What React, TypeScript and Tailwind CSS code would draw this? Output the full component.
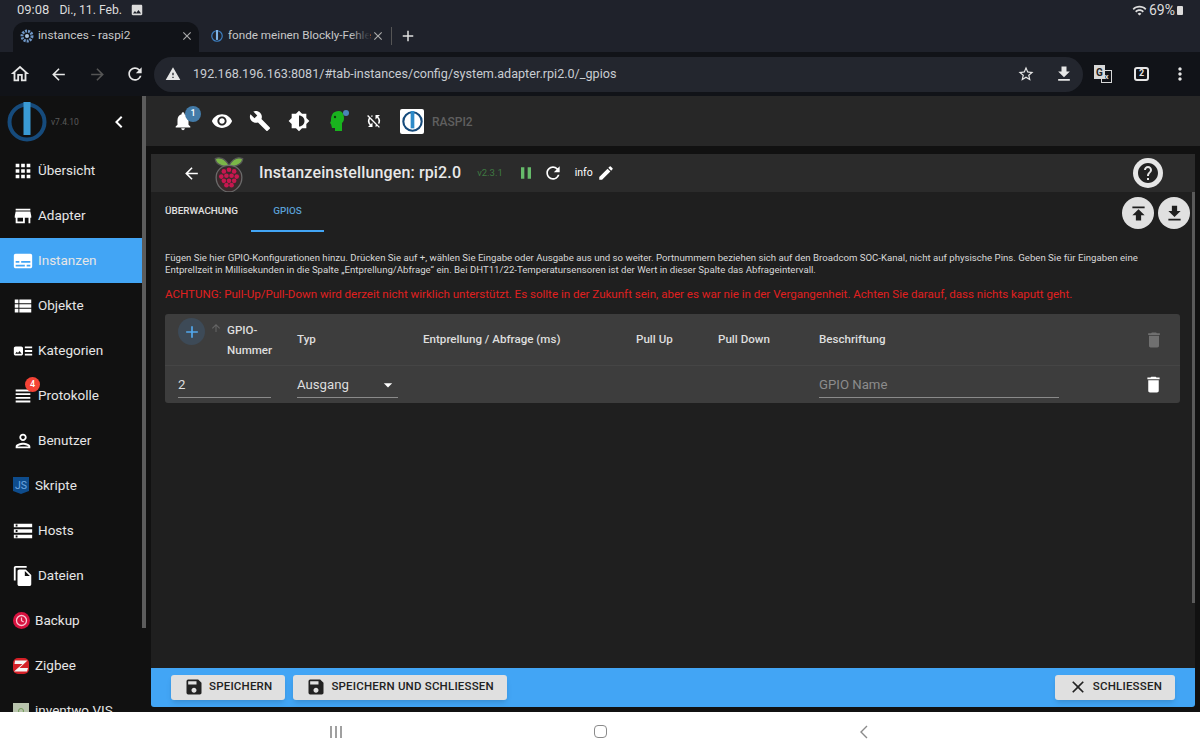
import {
  MdAdd,
  MdApps,
  MdArrowBack,
  MdArrowDropDown,
  MdArrowForward,
  MdArrowUpward,
  MdBrightness6,
  MdBuild,
  MdChevronLeft,
  MdClose,
  MdDelete,
  MdEdit,
  MdFileCopy,
  MdFileDownload,
  MdHelp,
  MdMoreVert,
  MdNotifications,
  MdOutlineHome,
  MdOutlinePerson,
  MdPause,
  MdPublish,
  MdRefresh,
  MdSave,
  MdStarBorder,
  MdStorage,
  MdStore,
  MdSubtitles,
  MdSyncDisabled,
  MdViewHeadline,
  MdViewList,
  MdVisibility,
  MdWarning,
  MdWifi,
  MdImage,
  MdArtTrack,
} from "react-icons/md";

// -------------------------------
// Logos
// -------------------------------
function IoLogo({ size = 40, ring = "#164b7c", bar = "#3a9bd5" }: { size?: number; ring?: string; bar?: string }) {
  return (
    <svg width={size} height={size} viewBox="0 0 40 40">
      <circle cx="20" cy="20" r="17.5" fill="none" stroke={ring} strokeWidth="4" />
      <rect x="16.5" y="0" width="7" height="33" fill={bar} />
    </svg>
  );
}

function Raspberry() {
  const seeds = [
    [15, 19], [21, 17], [27, 19], [12, 25], [18, 24], [24, 24], [30, 25],
    [15, 30], [21, 30], [27, 30], [18, 35], [24, 35],
  ];
  return (
    <svg width="36" height="38" viewBox="0 0 42 44">
      <path d="M21 12C16 3 9 2 5 4c0 5 5 9 16 10C32 13 37 9 37 4c-5-2-11-1-16 8z" fill="#7ab648" stroke="#555" strokeWidth="1.5" />
      <path d="M21 12c-9 0-15 6-15 14 0 10 8 17 15 17s15-7 15-17c0-8-6-14-15-14z" fill="#3a2a2c" stroke="#6b6b6b" strokeWidth="1.5" />
      {seeds.map(([x, y]) => (
        <circle key={`${x}-${y}`} cx={x} cy={y} r="2.7" fill="#c7174f" />
      ))}
    </svg>
  );
}

function BackupIcon() {
  return (
    <svg width="17" height="17" viewBox="0 0 17 17">
      <circle cx="8.5" cy="8.5" r="8.5" fill="#d8123f" />
      <circle cx="8.5" cy="8.5" r="5" fill="none" stroke="#f8c6d2" strokeWidth="1.3" />
      <path d="M8.5 5.5v3.2l2.2 1.3" fill="none" stroke="#f8c6d2" strokeWidth="1.2" />
    </svg>
  );
}

function ZigbeeIcon() {
  return (
    <svg width="16" height="16" viewBox="0 0 16 16">
      <rect x="0" y="0" width="16" height="16" rx="5" fill="#d42027" />
      <path d="M2 2.5h12.5L6.5 10H15l-1 3.5H1L9.5 6H1.5z" fill="#f4f4f4" />
    </svg>
  );
}

function JsIcon() {
  return (
    <svg width="16" height="17" viewBox="0 0 16 17">
      <path d="M0 0h16v14l-8 3-8-3z" fill="#0e4c8c" />
      <text x="8" y="12" textAnchor="middle" fontSize="10.5" fontFamily="Roboto, sans-serif" fill="#6fa8e0">
        JS
      </text>
    </svg>
  );
}

function InventwoIcon() {
  return (
    <div className="flex w-4 h-4 items-center justify-center bg-[#b9c4ad]">
      <div className="w-1.5 h-1.5 rounded-full border border-[#6f9a55]" />
    </div>
  );
}

// -------------------------------
// Sidebar
// -------------------------------
const NAV = [
  { label: "Übersicht", icon: <MdApps size={22} /> },
  { label: "Adapter", icon: <MdStore size={22} /> },
  { label: "Instanzen", icon: <MdSubtitles size={22} />, active: true },
  { label: "Objekte", icon: <MdViewList size={22} /> },
  { label: "Kategorien", icon: <MdArtTrack size={22} /> },
  { label: "Protokolle", icon: <MdViewHeadline size={22} />, badge: "4" },
  { label: "Benutzer", icon: <MdOutlinePerson size={22} /> },
  { label: "Skripte", icon: <JsIcon />, small: true },
  { label: "Hosts", icon: <MdStorage size={22} /> },
  { label: "Dateien", icon: <MdFileCopy size={22} /> },
  { label: "Backup", icon: <BackupIcon />, small: true },
  { label: "Zigbee", icon: <ZigbeeIcon />, small: true },
  { label: "inventwo VIS", icon: <InventwoIcon />, small: true },
];

function Sidebar() {
  return (
    <aside className="flex w-[146px] shrink-0 h-full overflow-hidden bg-[#111111]">
      <div className="w-[142px] flex flex-col">
        <div className="flex h-[52px] shrink-0 items-center pl-[7px] pr-3">
          <IoLogo />
          <span className="ml-[4px] text-[8.5px] text-[#5a5a5a]">v7.4.10</span>
          <MdChevronLeft size={24} className="ml-auto -mr-[1px] text-white" />
        </div>
        {NAV.map((n) => (
          <div
            key={n.label}
            className={`relative flex h-[45px] shrink-0 items-center text-[13.5px] text-[#e6e6e6] ${n.active ? "bg-[#42a5f5]" : ""} ${n.small ? "pl-[13px]" : "pl-[12px] gap-[4px]"}`}
          >
            <span className={`flex w-[22px] text-white ${n.small ? "justify-start" : "justify-center"}`}>{n.icon}</span>
            {n.badge && (
              <span className="absolute left-[25px] top-[4px] flex h-[15px] w-[15px] items-center justify-center rounded-full bg-[#f44336] text-[9px] font-medium text-white">
                {n.badge}
              </span>
            )}
            <span>{n.label}</span>
          </div>
        ))}
      </div>
      <div className="w-[4px] h-[532px] bg-[#5c5c5c]" />
    </aside>
  );
}

// -------------------------------
// Browser chrome
// -------------------------------
function BrowserChrome() {
  return (
    <div className="shrink-0">
      <div className="bg-[#1f222b] text-[#dcdcdc]">
        <div className="flex h-[20px] items-center pl-[17px] pr-[17px] text-[13px]">
          <span>09:08</span>
          <span className="ml-[10px] text-[12.2px]">Di., 11. Feb.</span>
          <MdImage size={14} className="ml-[8px]" />
          <MdWifi size={15} className="ml-auto" />
          <span className="ml-[2px] text-[14px]">69%</span>
          <div className="ml-[2px] h-[9px] w-[6px] rounded-[1px] bg-[#dcdcdc]" />
        </div>
        <div className="flex h-[32px] items-end pl-[13px] text-[11.8px]">
          <div className="flex h-[30px] w-[186px] items-center rounded-t-[12px] bg-[#111318] pb-[2px] pl-[7px] pr-[5px]">
            <svg width="14" height="14" viewBox="0 0 14 14">
              <circle cx="7" cy="7" r="5" fill="none" stroke="#6f97c7" strokeWidth="3" strokeDasharray="2 1" />
              <circle cx="7" cy="7" r="2" fill="#a8c3e0" />
            </svg>
            <span className="ml-[4px] text-[#c8c8c8]">instances - raspi2</span>
            <MdClose size={14} className="ml-auto text-[#aaaaaa]" />
          </div>
          <div className="flex h-[30px] items-center pb-[2px] pl-[12px] text-[#c8c8c8]">
            <IoLogo size={12} ring="#3d7fc1" bar="#7fb4e6" />
            <span className="relative ml-[5px] w-[142px] text-[11.7px] whitespace-nowrap">
              fonde meinen Blockly-Fehle
              <span className="absolute right-0 top-0 h-full w-[20px] bg-gradient-to-r from-transparent to-[#1f222b]" />
            </span>
            <MdClose size={14} className="ml-[1px] text-[#aaaaaa]" />
            <div className="ml-[6px] h-[18px] w-px bg-[#555555]" />
            <MdAdd size={18} className="ml-[7px] text-[#e0e0e0]" />
          </div>
        </div>
      </div>
      <div className="flex h-[44px] items-center bg-[#111318] pl-[9px] text-[#e6e6e6]">
        <MdOutlineHome size={22} />
        <MdArrowBack size={19} className="ml-[18px]" />
        <MdArrowForward size={19} className="ml-[20px] text-[#555555]" />
        <MdRefresh size={20} className="ml-[18px]" />
        <div className="ml-[9px] flex h-[35px] w-[929px] items-center rounded-full bg-[#23262e] pl-[11px] pr-[9px]">
          <MdWarning size={16} />
          <span className="ml-[12px] text-[12.6px] text-[#c8ccd2]">192.168.196.163:8081/#tab-instances/config/system.adapter.rpi2.0/_gpios</span>
          <MdStarBorder size={18} className="ml-auto" />
          <MdFileDownload size={20} className="ml-[19px]" />
        </div>
        {/* translate button */}
        <div className="relative ml-[11px] h-[18px] w-[18px]">
          <div className="absolute right-0 bottom-0 flex h-[13px] w-[11px] items-center justify-center border border-[#d8d8d8] bg-[#111318] text-[8px] font-bold text-[#d8d8d8]">
            x
          </div>
          <div className="absolute left-0 top-0 flex h-[14px] w-[11px] items-center justify-center bg-[#d8d8d8] text-[10px] font-bold text-[#222222]">
            G
          </div>
        </div>
        <div className="ml-[22px] flex h-[14px] w-[15px] items-center justify-center rounded-[3px] border-2 border-[#e6e6e6] text-[9px] font-bold">
          2
        </div>
        <MdMoreVert size={20} className="ml-[21px]" />
      </div>
    </div>
  );
}

// -------------------------------
// Top bar of the admin
// -------------------------------
function TopBar() {
  return (
    <div className="flex h-[50px] shrink-0 items-center bg-[#272727] pl-[26px] text-white">
      <div className="relative">
        <MdNotifications size={22} />
        <span className="absolute -right-[7px] -top-[4px] flex h-[16px] w-[16px] items-center justify-center rounded-full bg-[#437ba8] text-[9px] font-medium">
          1
        </span>
      </div>
      <MdVisibility size={22} className="ml-[17px]" />
      <MdBuild size={22} className="ml-[16px]" />
      <MdBrightness6 size={22} className="ml-[17px]" />
      <div className="relative ml-[20px]">
        <svg width="14" height="20" viewBox="0 0 14 20">
          <path d="M2 4c1-3 4-4 7-4 3 0 5 3 5 7 0 3-1 4-2 5v8H5v-3H2l-1-4-1-1 1-2c0-2 0-4 1-6z" fill="#19b31e" />
          <circle cx="5" cy="6" r="1.2" fill="#0c3d0e" />
        </svg>
        <span className="absolute -right-[5px] -top-[1px] h-[6px] w-[6px] rounded-full bg-[#4a86b8]" />
      </div>
      <MdSyncDisabled size={18} className="ml-[21px]" />
      <div className="ml-[17px] flex h-[25px] w-[24px] items-center justify-center rounded-[2px] bg-white">
        <IoLogo size={21} ring="#164b7c" bar="#2e8bc9" />
      </div>
      <span className="ml-[8px] pt-[1px] text-[12px] font-medium text-[#5f5f5f]">RASPI2</span>
    </div>
  );
}

// -------------------------------
// Instance settings panel
// -------------------------------
function PanelHeader() {
  return (
    <div className="flex h-[38px] shrink-0 items-center bg-[#2b2b2b] pl-[31px] pr-[32px] text-white">
      <MdArrowBack size={19} />
      <div className="ml-[10px] -mb-[2px]">
        <Raspberry />
      </div>
      <span className="ml-[12px] text-[16px] font-medium tracking-[0.14px] text-[#e8e8e8]">Instanzeinstellungen: rpi2.0</span>
      <span className="ml-[16px] text-[9.5px] text-[#3f7a42]">v2.3.1</span>
      <MdPause size={20} className="ml-[13px] text-[#66bb6a]" />
      <MdRefresh size={20} className="ml-[7px]" />
      <span className="ml-[12px] text-[10.5px]">info</span>
      <MdEdit size={18} className="ml-[4px]" />
      <div className="relative ml-auto -mt-[1px] flex h-[30px] w-[30px] items-center justify-center rounded-full bg-[#e6e6e6]">
        <MdHelp size={24} className="text-[#222222]" />
      </div>
    </div>
  );
}

function Fab({ children }: { children: React.ReactNode }) {
  return (
    <div className="flex h-[32px] w-[32px] items-center justify-center rounded-full bg-[#e0e0e0] text-[#1f1f1f]">
      {children}
    </div>
  );
}

const HEAD_COLS = "grid grid-cols-[119px_126px_213px_82px_101px_1fr_50px] items-center";

function GpioTable() {
  return (
    <div className="ml-[14px] mr-[15px] mt-[13px] rounded-[3px] bg-[#3d3d3d] text-[#dedede]">
      <div className={`${HEAD_COLS} h-[52px] border-b border-[#454545] text-[11.6px] font-medium`}>
        <div className="relative flex items-center pl-[13px]">
          <div className="-mt-[16px] flex h-[27px] w-[27px] items-center justify-center rounded-full bg-[#3d4a57]">
            <MdAdd size={20} className="text-[#52a8ee]" />
          </div>
          <MdArrowUpward size={12} className="ml-[5px] -mt-[24px] text-[#666666]" />
          <div className="ml-[5px] leading-[20px]">
            GPIO-
            <br />
            Nummer
          </div>
        </div>
        <div className="pl-[13px]">Typ</div>
        <div className="pl-[13px]">Entprellung / Abfrage (ms)</div>
        <div className="pl-[13px]">Pull Up</div>
        <div className="pl-[13px]">Pull Down</div>
        <div className="pl-[13px]">Beschriftung</div>
        <div className="flex justify-center pr-[2px]">
          <MdDelete size={20} className="text-[#707070]" />
        </div>
      </div>
      <div className={`${HEAD_COLS} h-[37px] pb-[4px] text-[13.2px]`}>
        <div className="pl-[13px] pr-[13px]">
          <div className="flex h-[30px] items-center border-b border-[#8a8a8a] pt-[5px]">2</div>
        </div>
        <div className="pl-[13px] pr-[12px]">
          <div className="flex h-[30px] items-center justify-between border-b border-[#8a8a8a] pt-[5px]">
            <span>Ausgang</span>
            <MdArrowDropDown size={20} className="text-white" />
          </div>
        </div>
        <div />
        <div />
        <div />
        <div className="pl-[13px] pr-[71px]">
          <div className="flex h-[30px] items-center border-b border-[#8a8a8a] pt-[5px] text-[#8c8c8c]">GPIO Name</div>
        </div>
        <div className="flex justify-center pr-[4px] pt-[4px]">
          <MdDelete size={21} className="text-white" />
        </div>
      </div>
    </div>
  );
}

function PanelBody() {
  return (
    <div className="relative flex-1 min-h-0 bg-[#1f1f1f]">
      <div className="flex h-[40px] text-[9.9px] font-medium uppercase">
        <div className="flex w-[100px] items-center justify-center pb-[2px] pl-[1px] text-[#e0e0e0]">Überwachung</div>
        <div className="flex w-[73px] items-center justify-center border-b-2 border-[#42a5f5] text-[#5a9fd4]">GPIOS</div>
      </div>
      <div className="absolute right-[5px] top-[5px] flex gap-[4px]">
        <Fab>
          <MdPublish size={21} />
        </Fab>
        <Fab>
          <MdFileDownload size={21} />
        </Fab>
      </div>
      <div className="absolute right-0 top-0 h-[411px] w-[3px] bg-[#5a5a5a]" />
      <div className="mt-[20px] ml-[14px] mr-[40px] text-[9.65px] leading-[12px] text-[#d8d8d8]">
        Fügen Sie hier GPIO-Konfigurationen hinzu. Drücken Sie auf +, wählen Sie Eingabe oder Ausgabe aus und so weiter. Portnummern beziehen sich auf den Broadcom SOC-Kanal, nicht auf physische Pins. Geben Sie für Eingaben eine Entprellzeit in Millisekunden in die Spalte „Entprellung/Abfrage“ ein. Bei DHT11/22-Temperatursensoren ist der Wert in dieser Spalte das Abfrageintervall.
      </div>
      <div className="mt-[11px] ml-[14px] text-[11.55px] leading-[14px] text-[#e02020]">
        ACHTUNG: Pull-Up/Pull-Down wird derzeit nicht wirklich unterstützt. Es sollte in der Zukunft sein, aber es war nie in der Vergangenheit. Achten Sie darauf, dass nichts kaputt geht.
      </div>
      <GpioTable />
    </div>
  );
}

function FooterButton({ icon, label }: { icon: React.ReactNode; label: string }) {
  return (
    <button className="flex h-[25px] items-center gap-[5px] rounded-[3px] bg-[#e0e0e0] pb-[1px] pl-[13px] pr-[13px] text-[11.5px] font-medium tracking-[0.2px] text-[#222222] shadow-md">
      {icon}
      {label}
    </button>
  );
}

function PanelFooter() {
  return (
    <div className="flex h-[39px] shrink-0 items-center gap-[8px] rounded-b-[3px] bg-[#42a5f5] pl-[20px] pr-[20px]">
      <FooterButton icon={<MdSave size={20} />} label="SPEICHERN" />
      <FooterButton icon={<MdSave size={20} />} label="SPEICHERN UND SCHLIESSEN" />
      <div className="ml-auto">
        <FooterButton icon={<MdClose size={20} />} label="SCHLIESSEN" />
      </div>
    </div>
  );
}

export default function App() {
  return (
    <div className="flex h-[751px] w-[1200px] flex-col overflow-hidden bg-white font-['Roboto',sans-serif]">
      <BrowserChrome />
      <div className="flex h-[616px] shrink-0 overflow-hidden bg-[#111111]">
        <Sidebar />
        <main className="flex min-w-0 flex-1 flex-col">
          <TopBar />
          <div className="flex min-h-0 flex-1 flex-col pl-[5px] pr-[5px] pt-[8px] pb-[5px]">
            <PanelHeader />
            <PanelBody />
            <PanelFooter />
          </div>
        </main>
      </div>
      {/* android nav bar */}
      <div className="grid flex-1 grid-cols-[264px_264px_264px] items-center justify-center justify-items-center bg-white">
        <div className="flex gap-[3px]">
          <div className="h-[12px] w-[2px] bg-[#a0a0a0]" />
          <div className="h-[12px] w-[2px] bg-[#a0a0a0]" />
          <div className="h-[12px] w-[2px] bg-[#a0a0a0]" />
        </div>
        <div className="h-[13px] w-[13px] rounded-[4px] border-[1.5px] border-[#8a8a8a]" />
        <svg width="10" height="14" viewBox="0 0 10 14">
          <path d="M8 1L2 7l6 6" fill="none" stroke="#8a8a8a" strokeWidth="1.4" />
        </svg>
      </div>
    </div>
  );
}
